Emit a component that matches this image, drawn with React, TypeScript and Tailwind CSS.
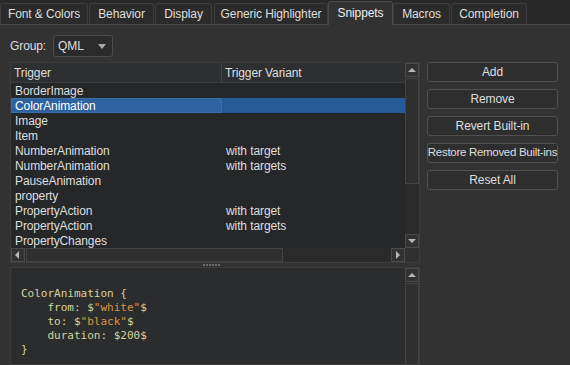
import React from 'react';

const tabs = [
  { label: 'Font & Colors', cls: 'w-[88px]' },
  { label: 'Behavior', cls: 'ml-[1px] w-[65px]' },
  { label: 'Display', cls: 'ml-[1px] w-[57px]' },
  { label: 'Generic Highlighter', cls: 'ml-[2px] w-[114px]' },
  { label: 'Snippets', cls: 'w-[65px]', active: true },
  { label: 'Macros', cls: 'w-[57px]' },
  { label: 'Completion', cls: 'ml-[1px] w-[76px]' },
];

const rows = [
  ['BorderImage', ''],
  ['ColorAnimation', ''],
  ['Image', ''],
  ['Item', ''],
  ['NumberAnimation', 'with target'],
  ['NumberAnimation', 'with targets'],
  ['PauseAnimation', ''],
  ['property', ''],
  ['PropertyAction', 'with target'],
  ['PropertyAction', 'with targets'],
  ['PropertyChanges', ''],
];

const buttons = ['Add', 'Remove', 'Revert Built-in', 'Restore Removed Built-ins', 'Reset All'];

function Arrow({ dir }: { dir: 'up' | 'down' | 'left' | 'right' }) {
  const pts = {
    up: '1,6 5,2 9,6',
    down: '1,2 5,6 9,2',
    left: '6,0 2,4 6,8',
    right: '3,0 7,4 3,8',
  }[dir];
  return (
    <svg width="10" height="8" viewBox="0 0 10 8">
      <polygon points={pts} fill="#b8b8b8" />
    </svg>
  );
}

function ArrowButton({ dir }: { dir: 'up' | 'down' | 'left' | 'right' }) {
  return (
    <div className="flex h-[14px] w-[14px] shrink-0 items-center justify-center border border-[#4a4a4a] bg-[#323232]">
      <Arrow dir={dir} />
    </div>
  );
}

export default function App() {
  return (
    <div
      className="flex h-[365px] w-[570px] flex-col overflow-hidden bg-[#292929] text-[12px] tracking-[-0.1px] text-[#dedede]"
      style={{ fontFamily: '"Liberation Sans", Arial, sans-serif' }}
    >
      {/* Tab bar */}
      <div className="flex h-[24px] shrink-0 items-end">
        {tabs.map((tab) =>
          tab.active ? (
            <div
              key={tab.label}
              className={`relative z-10 -mb-px flex h-[24px] items-center justify-center rounded-t-[3px] border border-b-0 border-[#4a4a4a] bg-[#323232] pb-[2px] text-[#f0f0f0] ${tab.cls}`}
            >
              {tab.label}
            </div>
          ) : (
            <div
              key={tab.label}
              className={`flex h-[21px] items-center justify-center rounded-t-[3px] border border-b-0 border-[#3e3e3e] bg-[#2b2b2b] ${tab.cls}`}
            >
              {tab.label}
            </div>
          ),
        )}
      </div>

      {/* Pane */}
      <div className="flex flex-1 flex-col border-t border-[#4a4a4a] bg-[#323232] px-[10px]">
        {/* Group row */}
        <div className="mt-[10px] flex h-[22px] items-center">
          <span className="w-[43px]">Group:</span>
          <div className="flex h-[22px] w-[60px] items-center justify-between rounded-[3px] border border-[#4c4c4c] bg-[#2b2b2b] pl-[4px] pr-[6px]">
            <span>QML</span>
            <svg width="8" height="5" viewBox="0 0 8 5">
              <polygon points="0,0 8,0 4,5" fill="#a8a8a8" />
            </svg>
          </div>
        </div>

        <div className="mt-[5px] flex flex-1 gap-[7px]">
          {/* Left column */}
          <div className="flex w-[410px] flex-col">
            {/* List */}
            <div className="flex h-[201px] flex-col border border-[#3c3c3c] bg-[#262729]">
              <div className="flex min-h-0 flex-1">
                <div className="flex flex-1 flex-col">
                  <div className="flex h-[20px] border-b border-[#3c3c3c] bg-[#2e2f31]">
                    <div className="flex w-[211px] items-center border-r border-[#444] pl-[3px]">Trigger</div>
                    <div className="flex flex-1 items-center pl-[3px]">Trigger Variant</div>
                  </div>
                  {rows.map(([name, variant], i) =>
                    i === 1 ? (
                      <div key={i} className="flex h-[15px] bg-[#245b96]">
                        <div className="flex w-[211px] items-center border border-[#3a6ea8] bg-[#2c63a0] pl-[3px] text-white">
                          {name}
                        </div>
                        <div className="flex flex-1 items-center pl-[4px]">{variant}</div>
                      </div>
                    ) : (
                      <div key={i} className="flex h-[15px]">
                        <div className="flex w-[212px] items-center pl-[4px]">{name}</div>
                        <div className="flex flex-1 items-center pl-[3px]">{variant}</div>
                      </div>
                    ),
                  )}
                </div>
                {/* Vertical scrollbar */}
                <div className="flex w-[14px] flex-col bg-[#2a2a2a]">
                  <ArrowButton dir="up" />
                  <div className="flex flex-1 flex-col pt-[1px]">
                    <div className="h-[106px] border border-[#444] bg-[#2f2f2f]" />
                  </div>
                  <ArrowButton dir="down" />
                </div>
              </div>
              {/* Horizontal scrollbar */}
              <div className="flex h-[14px] bg-[#2a2a2a]">
                <ArrowButton dir="left" />
                <div className="flex flex-1 pl-[1px]">
                  <div className="w-[257px] border border-[#444] bg-[#2f2f2f]" />
                </div>
                <ArrowButton dir="right" />
                <div className="w-[14px] bg-[#303030]" />
              </div>
            </div>

            {/* Splitter */}
            <div className="flex h-[4px] items-center justify-center">
              <div className="mr-[8px] flex gap-[1px]">
                {[0, 1, 2, 3, 4, 5].map((d) => (
                  <div key={d} className="h-[2px] w-[2px] bg-[#6a6a6a]" />
                ))}
              </div>
            </div>

            {/* Editor */}
            <div className="flex flex-1 border border-[#3c3c3c] bg-[#2b2c2e]">
              <div
                className="flex-1 pl-[10px] pt-[19px] text-[11px] leading-[14px] tracking-normal whitespace-pre text-[#d8d29c]"
                style={{ fontFamily: '"DejaVu Sans Mono", monospace' }}
              >
                <div>ColorAnimation {'{'}</div>
                <div>
                  {'    from: $'}
                  <span className="text-[#d69545]">"white"</span>$
                </div>
                <div>
                  {'    to: $'}
                  <span className="text-[#d69545]">"black"</span>$
                </div>
                <div>{'    duration: $200$'}</div>
                <div>{'}'}</div>
              </div>
              <div className="flex w-[14px] flex-col bg-[#2a2a2a]">
                <ArrowButton dir="up" />
                <div className="mt-[1px] flex-1 border border-b-0 border-[#444] bg-[#2f2f2f]" />
              </div>
            </div>
          </div>

          {/* Buttons */}
          <div className="flex w-[131px] flex-col gap-[7px]">
            {buttons.map((b) => (
              <div
                key={b}
                className={`flex h-[20px] items-center justify-center rounded-[3px] border border-[#505050] bg-[#2e2e2e] whitespace-nowrap ${
                  b.length > 20 ? 'text-[11.5px] tracking-[-0.3px]' : ''
                }`}
              >
                {b}
              </div>
            ))}
          </div>
        </div>
      </div>
    </div>
  );
}
